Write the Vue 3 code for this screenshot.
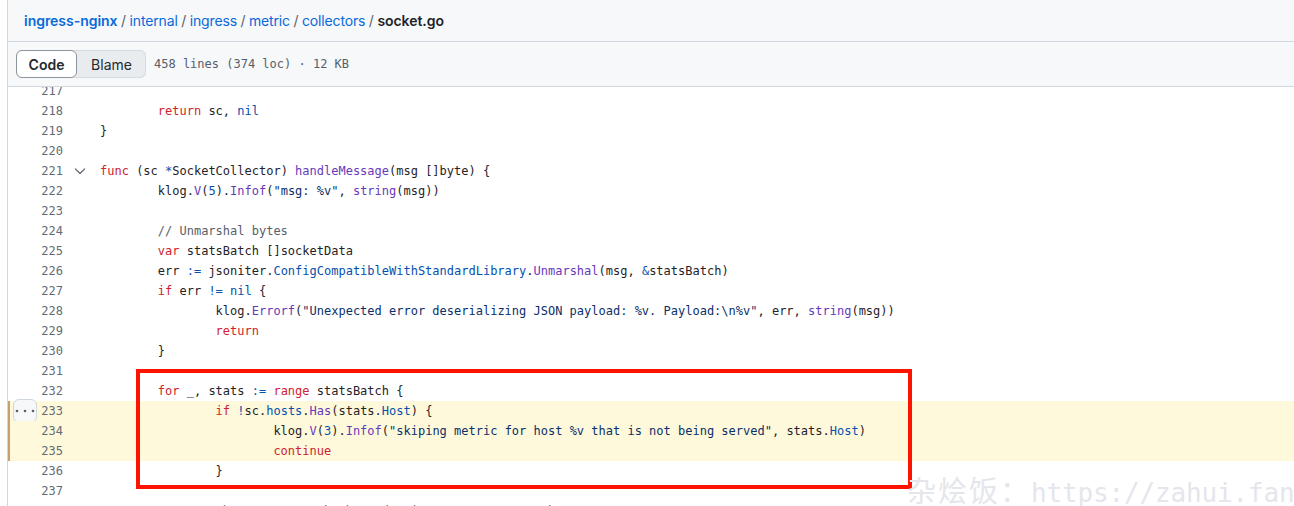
<script setup>
const k = t => ['k', t]
const f = t => ['f', t]
const c = t => ['c', t]
const s = t => ['s', t]
const m = t => ['m', t]
const p = t => ['', t]

const lines = [
  { n: 217, t: [] },
  { n: 218, t: [p('\t'), k('return'), p(' sc, '), c('nil')] },
  { n: 219, t: [p('}')] },
  { n: 220, t: [] },
  { n: 221, fold: true, t: [k('func'), p(' (sc '), c('*'), p('SocketCollector) '), f('handleMessage'), p('(msg []byte) {')] },
  { n: 222, t: [p('\tklog.'), f('V'), p('('), c('5'), p(').'), f('Infof'), p('('), s('"msg: %v"'), p(', '), f('string'), p('(msg))')] },
  { n: 223, t: [] },
  { n: 224, t: [p('\t'), m('// Unmarshal bytes')] },
  { n: 225, t: [p('\t'), k('var'), p(' statsBatch []socketData')] },
  { n: 226, t: [p('\terr '), c(':='), p(' jsoniter.'), c('ConfigCompatibleWithStandardLibrary'), p('.'), f('Unmarshal'), p('(msg, '), c('&'), p('statsBatch)')] },
  { n: 227, t: [p('\t'), k('if'), p(' err '), c('!='), p(' '), c('nil'), p(' {')] },
  { n: 228, t: [p('\t\tklog.'), f('Errorf'), p('('), s('"Unexpected error deserializing JSON payload: %v. Payload:\\n%v"'), p(', err, '), f('string'), p('(msg))')] },
  { n: 229, t: [p('\t\t'), k('return')] },
  { n: 230, t: [p('\t}')] },
  { n: 231, t: [] },
  { n: 232, t: [p('\t'), k('for'), p(' _, stats '), c(':='), p(' '), k('range'), p(' statsBatch {')] },
  { n: 233, hl: true, more: true, t: [p('\t\t'), k('if'), p(' '), c('!'), p('sc.'), c('hosts'), p('.'), f('Has'), p('(stats.'), c('Host'), p(') {')] },
  { n: 234, hl: true, t: [p('\t\t\tklog.'), f('V'), p('('), c('3'), p(').'), f('Infof'), p('('), s('"skiping metric for host %v that is not being served"'), p(', stats.'), c('Host'), p(')')] },
  { n: 235, hl: true, t: [p('\t\t\t'), k('continue')] },
  { n: 236, t: [p('\t\t}')] },
  { n: 237, t: [] },
  { n: 238, t: [p('\t'), m('// Note these must match the order in requestTags at the top')] },
]
</script>

<template>
  <div class="page">
    <header class="crumbs">
      <a class="repo">ingress-nginx</a>
      <span class="sep">/</span><a>internal</a>
      <span class="sep">/</span><a>ingress</a>
      <span class="sep">/</span><a>metric</a>
      <span class="sep">/</span><a>collectors</a>
      <span class="sep">/</span><strong>socket.go</strong>
    </header>
    <div class="toolbar">
      <div class="segment">
        <span class="seg active">Code</span>
        <span class="seg">Blame</span>
      </div>
      <span class="meta">458 lines (374 loc) · 12 KB</span>
    </div>
    <div class="code">
      <div class="lines">
        <div v-for="l in lines" :key="l.n" class="row" :class="{ hl: l.hl }">
          <button v-if="l.more" class="more" type="button" aria-label="More">
            <svg width="20" height="16" viewBox="0 0 20 16" fill="currentColor">
              <circle cx="2" cy="8" r="1.3" />
              <circle cx="10" cy="8" r="1.3" />
              <circle cx="18" cy="8" r="1.3" />
            </svg>
          </button>
          <span class="num">{{ l.n }}</span>
          <span class="fold">
            <svg v-if="l.fold" width="12" height="12" viewBox="0 0 12 12" fill="none" stroke="currentColor" stroke-width="1.2" stroke-linecap="round" stroke-linejoin="round">
              <path d="M1.5 4l4.5 4.5 4.5-4.5" />
            </svg>
          </span>
          <span class="src"><span v-for="(tok, i) in l.t" :key="i" :class="tok[0]">{{ tok[1] }}</span></span>
        </div>
      </div>
    </div>
    <div class="callout"></div>
    <div class="watermark"><span class="wm-cjk">杂烩饭：</span><span class="wm-lat">https://zahui.fan</span></div>
  </div>
</template>

<style>
html, body { margin: 0; background: #fff; }
</style>

<style scoped>
.page {
  position: relative;
  box-sizing: border-box;
  width: 1294px;
  height: 506px;
  overflow: hidden;
  padding-left: 7px;
  background: #fff;
  display: flex;
  flex-direction: column;
  font-family: Inter, "Liberation Sans", sans-serif;
  color: #1f2328;
}
.crumbs {
  box-sizing: border-box;
  height: 42px;
  flex: none;
  display: flex;
  align-items: center;
  padding-left: 16px;
  border-left: 1px solid #d0d7de;
  border-bottom: 1px solid #d0d7de;
  background: #f6f8fa;
  font-size: 14px;
  white-space: pre;
}
.crumbs a { color: #0969da; letter-spacing: -0.15px; }
.crumbs .repo { font-weight: 600; letter-spacing: -0.03px; }
.crumbs .sep { color: #57606a; margin: 0 3.5px; }
.crumbs strong { font-weight: 600; letter-spacing: -0.05px; }
.toolbar {
  box-sizing: border-box;
  height: 45px;
  flex: none;
  display: flex;
  align-items: center;
  gap: 8px;
  padding: 0 0 0 8px;
  border-left: 1px solid #d0d7de;
  border-bottom: 1px solid #d0d7de;
  background: #f6f8fa;
}
.segment {
  display: flex;
  height: 28px;
  width: 130px;
  border-radius: 6px;
  background: #e9ecef;
  box-shadow: inset 0 0 0 1px #d5dae0;
  font-size: 14px;
  font-weight: 400;
}
.seg {
  display: flex;
  align-items: center;
  justify-content: center;
  flex: 1 1 0;
  color: #24292f;
}
.seg.active {
  flex: none;
  width: 61px;
  box-sizing: border-box;
  background: #fff;
  border: 1px solid #8c959f;
  border-radius: 6px;
  font-weight: 600;
}
.meta {
  font-family: "DejaVu Sans Mono", "Liberation Mono", monospace;
  font-size: 12px;
  color: #57606a;
}
.code {
  flex: 1;
  min-height: 0;
  overflow: hidden;
  border-left: 1px solid #d0d7de;
}
.lines { margin-top: -6px; }
.row {
  position: relative;
  display: flex;
  height: 20px;
  line-height: 20px;
  font-family: "DejaVu Sans Mono", "Liberation Mono", monospace;
  font-size: 12px;
  white-space: pre;
  tab-size: 8;
}
.row.hl {
  background: #fef9da;
  box-shadow: inset 2px 0 0 #c8a06e;
}
.num {
  box-sizing: border-box;
  width: 55px;
  text-align: right;
  color: #636c76;
  flex: none;
}
.fold {
  box-sizing: border-box;
  width: 37px;
  padding-right: 4px;
  flex: none;
  display: flex;
  align-items: center;
  justify-content: center;
  color: #636c76;
}
.src { color: #1f2328; }
.k { color: #cf222e; }
.f { color: #6639ba; }
.c { color: #0550ae; }
.s { color: #0a3069; }
.m { color: #57606a; }
.more {
  position: absolute;
  left: 5px;
  top: -2px;
  box-sizing: border-box;
  width: 24px;
  height: 24px;
  padding: 0;
  display: flex;
  align-items: center;
  justify-content: center;
  background: #f6f8fa;
  border: 1px solid #d0d7de;
  border-radius: 6px;
  color: #57606a;
}
.callout {
  position: absolute;
  left: 136px;
  top: 369px;
  box-sizing: border-box;
  width: 776px;
  height: 120px;
  border: 4px solid #fe1300;
}
.watermark {
  position: absolute;
  left: 907px;
  top: 471px;
  height: 36px;
  line-height: 36px;
  white-space: pre;
  color: #e4e6ec;
  pointer-events: none;
}
.wm-cjk {
  font-family: "Noto Sans CJK SC", sans-serif;
  font-size: 29px;
  letter-spacing: 2px;
}
.wm-lat {
  font-family: "DejaVu Sans Mono", monospace;
  font-size: 26px;
  letter-spacing: -0.15px;
}
</style>
